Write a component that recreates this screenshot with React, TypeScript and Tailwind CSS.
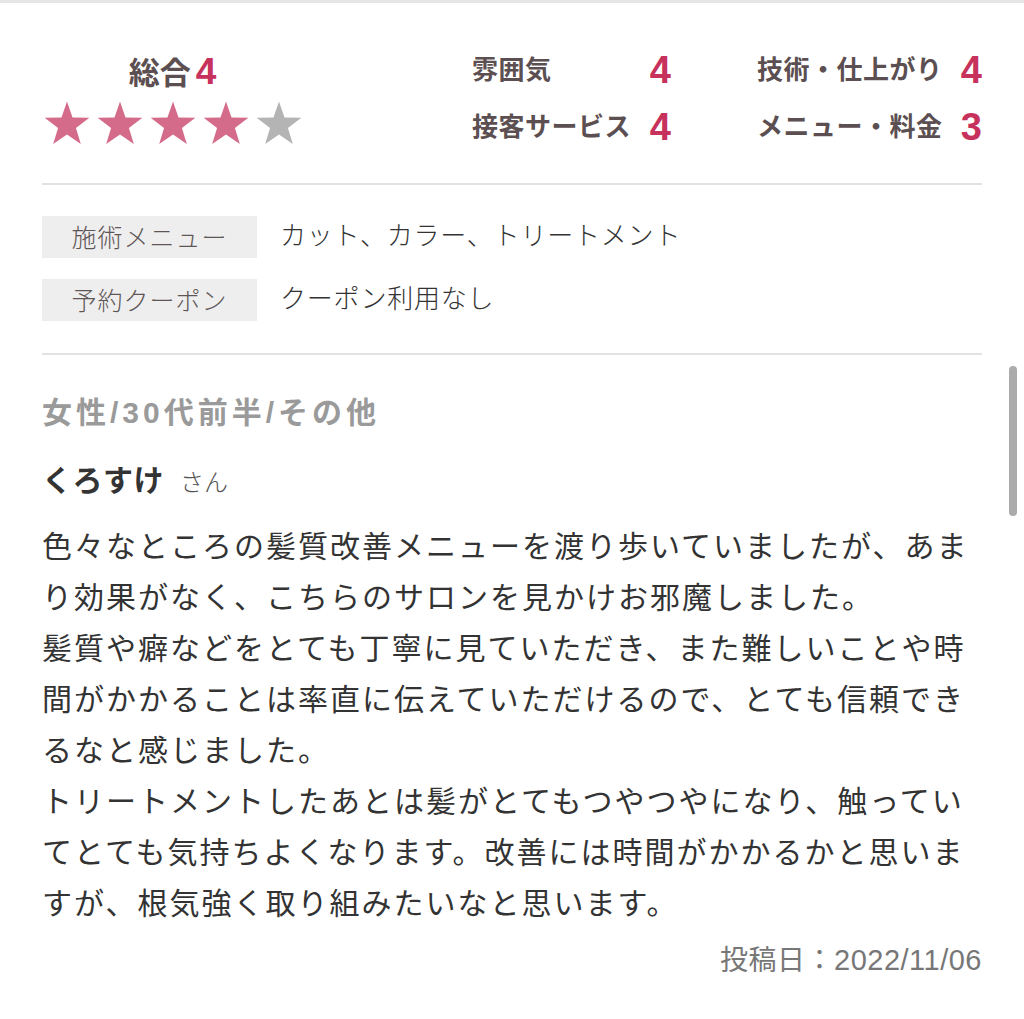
import React from "react";

const starPoints = (() => {
  const cx = 24;
  const cy = 25;
  const R = 23.5;
  const r = 9.4;
  const pts: string[] = [];
  for (let i = 0; i < 10; i++) {
    const rad = i % 2 === 0 ? R : r;
    const a = (Math.PI / 5) * i - Math.PI / 2;
    pts.push(`${(cx + rad * Math.cos(a)).toFixed(2)},${(cy + rad * Math.sin(a)).toFixed(2)}`);
  }
  return pts.join(" ");
})();

function Star({ filled }: { filled: boolean }) {
  return (
    <svg width="48" height="46" viewBox="0 0 48 46" className="shrink-0">
      <polygon points={starPoints} fill={filled ? "#d56b8b" : "#b4b4b4"} />
    </svg>
  );
}

const subRatings = [
  { label: "雰囲気", value: 4 },
  { label: "技術・仕上がり", value: 4 },
  { label: "接客サービス", value: 4 },
  { label: "メニュー・料金", value: 3 },
];

const details = [
  { label: "施術メニュー", value: "カット、カラー、トリートメント" },
  { label: "予約クーポン", value: "クーポン利用なし" },
];

const body = [
  "色々なところの髪質改善メニューを渡り歩いていましたが、あまり効果がなく、こちらのサロンを見かけお邪魔しました。",
  "髪質や癖などをとても丁寧に見ていただき、また難しいことや時間がかかることは率直に伝えていただけるので、とても信頼できるなと感じました。",
  "トリートメントしたあとは髪がとてもつやつやになり、触っていてとても気持ちよくなります。改善には時間がかかるかと思いますが、根気強く取り組みたいなと思います。",
];

export default function App() {
  return (
    <div className="relative w-[1024px] h-[1019px] overflow-hidden bg-white font-['Liberation_Sans','Noto_Sans_CJK_JP',sans-serif]">
      <div className="h-[3px] bg-[#e6e6e6]" />

      <div className="px-[42px]">
        {/* Ratings */}
        <div className="flex h-[180px] items-start">
          <div className="w-[262px] pt-[51px] flex flex-col items-center">
            <div className="flex items-baseline h-[36px] leading-[36px]">
              <span className="text-[31px] font-bold text-[#5c4f51]">総合</span>
              <span className="ml-[5px] text-[37px] font-bold text-[#c6325b]">4</span>
            </div>
            <div className="mt-[10px] flex gap-[5px]">
              {[0, 1, 2, 3, 4].map((i) => (
                <Star key={i} filled={i < 4} />
              ))}
            </div>
          </div>

          <div className="ml-[169px] pt-[45px] grid grid-cols-[199px_225px] gap-x-[86px] gap-y-[13px]">
            {subRatings.map((r) => (
              <div key={r.label} className="flex h-[44px] items-center justify-between">
                <span className="text-[26px] font-bold text-[#5c4f51] tracking-[0.5px]">{r.label}</span>
                <span className="text-[38px] font-bold leading-none text-[#c6325b]">{r.value}</span>
              </div>
            ))}
          </div>
        </div>

        <div className="h-[2px] bg-[#e2e2e2]" />

        {/* Details */}
        <div className="pt-[31px] pb-[32px] flex flex-col gap-[21px]">
          {details.map((d) => (
            <div key={d.label} className="flex items-start">
              <div className="w-[215px] h-[42px] bg-[#eeeeee] flex items-center justify-center text-[25px] tracking-[1px] text-[#5e5656] font-['Noto_Sans_CJK_JP',sans-serif] font-light">
                {d.label}
              </div>
              <div className="ml-[23px] h-[36px] leading-[36px] text-[26px] tracking-[0.8px] text-[#333333] font-['Noto_Sans_CJK_JP',sans-serif] font-light">
                {d.value}
              </div>
            </div>
          ))}
        </div>

        <div className="h-[2px] bg-[#e2e2e2]" />

        {/* Review */}
        <div className="mt-[40px] h-[36px] leading-[36px] text-[30px] tracking-[4px] font-bold text-[#9a9a9a]">
          女性/30代前半/その他
        </div>

        <div className="mt-[32px] flex items-baseline h-[36px] leading-[36px]">
          <span className="text-[30px] font-bold tracking-[0.5px] text-[#333333]">くろすけ</span>
          <span className="ml-[16px] text-[24px] text-[#555555] font-['Noto_Sans_CJK_JP',sans-serif] font-light">さん</span>
        </div>

        <div className="mt-[20px] text-[30px] leading-[51px] tracking-[2px] text-[#333333] font-['Noto_Sans_CJK_JP',sans-serif]">
          {body.map((p, i) => (
            <p key={i}>{p}</p>
          ))}
        </div>

        <div className="mt-[15px] h-[36px] leading-[36px] text-right text-[28px] tracking-[0.5px] text-[#777777]">
          投稿日：<span className="text-[29px]">2022/11/06</span>
        </div>
      </div>

      {/* scroll indicator */}
      <div className="absolute left-[1009px] top-[366px] w-[8px] h-[150px] rounded-full bg-[#ababab]" />
    </div>
  );
}
